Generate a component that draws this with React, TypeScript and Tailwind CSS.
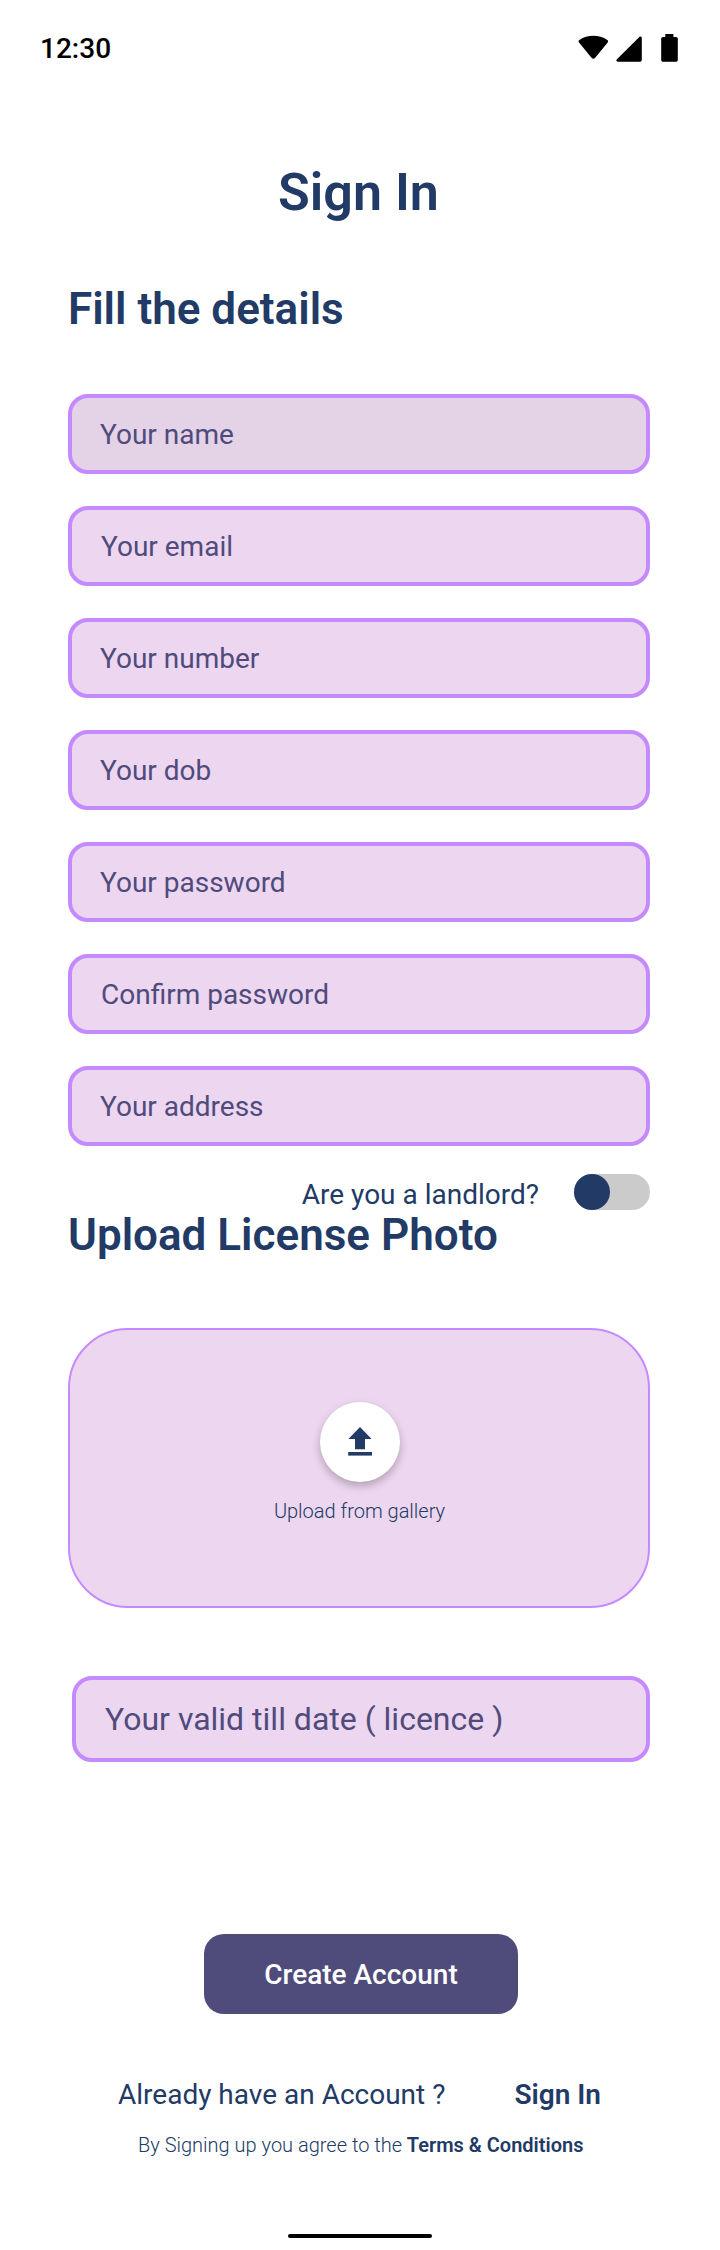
const FIELDS = [
  { label: 'Your name', look: 'bg-[#e4d2e7] pl-[28px]' },
  { label: 'Your email', look: 'bg-[#edd6ef] pl-[29px]' },
  { label: 'Your number', look: 'bg-[#edd6ef] pl-[28px]' },
  { label: 'Your dob', look: 'bg-[#edd6ef] pl-[28px]' },
  { label: 'Your password', look: 'bg-[#edd6ef] pl-[28px]' },
  { label: 'Confirm password', look: 'bg-[#edd6ef] pl-[29px]' },
  { label: 'Your address', look: 'bg-[#edd6ef] pl-[28px]' },
];

function StatusBar() {
  return (
    <header className="flex h-24 items-center justify-between pl-10 pr-[40px] text-black">
      <span className="pt-0.5 text-[28px] leading-8 font-medium">12:30</span>
      <svg className="h-8 w-[104px]" viewBox="576 32 104 32" fill="currentColor" aria-hidden="true">
        <path d="M579 42.4C578.3 41.5 578.5 40.6 579.4 40C583.5 37.2 588.4 35.8 593.3 35.8C598.2 35.8 603.1 37.2 607.3 40C608.2 40.6 608.3 41.5 607.7 42.4L595.2 57.8C594.2 59 592.5 59 591.5 57.8Z" />
        <path d="M639.3 36.9C640.3 35.9 641.8 36.5 641.8 38V59.5C641.8 60.9 640.9 61.8 639.5 61.8H618C616.5 61.8 615.8 60.3 616.9 59.2Z" />
        <path d="M665.3 34H673.4V37H676C677 37 677.8 37.8 677.8 38.8V60C677.8 61 677 61.8 676 61.8H663C662 61.8 661.2 61 661.2 60V38.8C661.2 37.8 662 37 663 37H665.3Z" />
      </svg>
    </header>
  );
}

function UploadIcon() {
  return (
    <svg className="h-8 w-8" viewBox="0 0 32 32" fill="#213a66" aria-hidden="true">
      <path d="M16 1L27.6 13H21V23.3H11V13H4.4Z" />
      <path d="M4.2 26H28V29.6H4.2Z" />
    </svg>
  );
}

export default function App() {
  return (
    <div
      className="flex h-[2250px] w-[720px] flex-col bg-white text-[#213a66]"
      style={{ fontFamily: 'Roboto, "Liberation Sans", sans-serif' }}
    >
      <StatusBar />
      <main className="flex flex-col pr-[70px] pl-[68px]">
        <h1 className="mt-[67px] h-[60px] pr-px text-center text-[52px] leading-[60px] font-semibold">Sign In</h1>
        <h2 className="mt-[60px] h-[52px] text-[44px] leading-[52px] font-semibold">Fill the details</h2>
        <form className="mt-[59px] flex flex-col gap-8">
          {FIELDS.map((field) => (
            <div
              key={field.label}
              className={`flex h-20 items-center rounded-[20px] border-4 border-[#c58aff] pt-0.5 text-[28px] leading-8 text-[#4f4b7c] ${field.look}`}
            >
              {field.label}
            </div>
          ))}
        </form>
        <div className="mt-7 flex h-9 justify-end gap-[35px]">
          <span className="pt-[5px] text-[28px] leading-8">Are you a landlord?</span>
          <span className="flex h-9 w-[76px] rounded-full bg-[#cbcbcb]">
            <span className="h-9 w-9 rounded-full bg-[#213a66]" />
          </span>
        </div>
        <h2 className="-mt-[1px] h-[52px] text-[44px] leading-[52px] font-semibold">Upload License Photo</h2>
        <section className="mt-[67px] flex h-[280px] flex-col items-center rounded-[60px] border-2 border-[#c58aff] bg-[#edd6ef] pt-[72px]">
          <span className="ml-[2px] flex h-20 w-20 items-center justify-center rounded-full bg-white shadow-[0_4px_8px_rgba(0,0,0,0.25)]">
            <UploadIcon />
          </span>
          <span className="mt-[17px] ml-px text-[20px] leading-6 font-light">Upload from gallery</span>
        </section>
        <div className="mt-[68px] ml-1 flex h-[86px] items-center rounded-[20px] border-4 border-[#c58aff] bg-[#edd6ef] pl-[29px] text-[32px] leading-9 text-[#4f4b7c]">
          Your valid till date ( licence )
        </div>
        <button
          type="button"
          className="mt-[172px] ml-[136px] h-20 w-[314px] rounded-[20px] bg-[#4f4c7c] pt-0.5 text-[28px] leading-8 font-medium text-white"
        >
          Create Account
        </button>
        <p className="mt-[65px] ml-[50px] flex h-8 gap-[69px] text-[28px] leading-8">
          <span>Already have an Account ?</span>
          <strong className="font-semibold">Sign In</strong>
        </p>
        <p className="mt-[22px] ml-[70px] h-6 text-[20px] leading-6 font-light whitespace-nowrap">
          By Signing up you agree to the <strong className="font-semibold">Terms &amp; Conditions</strong>
        </p>
      </main>
      <div className="mt-auto mb-3 h-1 w-36 self-center rounded-full bg-black" />
    </div>
  );
}
